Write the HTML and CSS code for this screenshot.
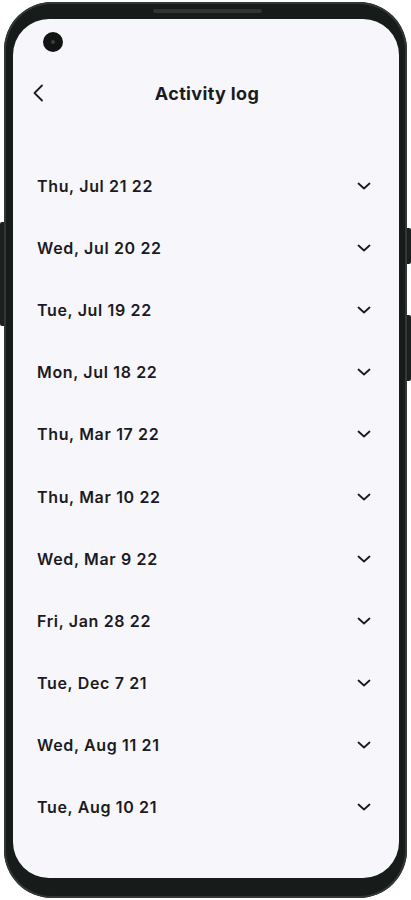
FILE: index.html
```html
<!DOCTYPE html>
<html lang="en">
<head>
    <meta charset="UTF-8">
    <meta name="viewport" content="width=device-width, initial-scale=1.0">
    <title>Activity log</title>
    <link rel="stylesheet" href="styles.css">
</head>
<body>

    <div class="phone">
        <div class="speaker"></div>
        <div class="side-btn left-btn"></div>
        <div class="side-btn right-btn-1"></div>
        <div class="side-btn right-btn-2"></div>

        <div class="screen">
            <div class="camera"></div>

            <div class="header">
                <button class="back-btn" aria-label="Back">
                    <svg width="12" height="18" viewBox="0 0 12 18">
                        <path d="M10 1.5 L2.5 9 L10 16.5" fill="none" stroke="#1b1b1f" stroke-width="1.8" stroke-linecap="round" stroke-linejoin="round"/>
                    </svg>
                </button>
                <h1>Activity log</h1>
            </div>

            <ul class="log-list">
                <li class="log-item"><span>Thu, Jul 21 22</span><svg class="chev" width="14" height="8" viewBox="0 0 14 8"><path d="M1.5 1.5 L7 6.5 L12.5 1.5" /></svg></li>
                <li class="log-item"><span>Wed, Jul 20 22</span><svg class="chev" width="14" height="8" viewBox="0 0 14 8"><path d="M1.5 1.5 L7 6.5 L12.5 1.5" /></svg></li>
                <li class="log-item"><span>Tue, Jul 19 22</span><svg class="chev" width="14" height="8" viewBox="0 0 14 8"><path d="M1.5 1.5 L7 6.5 L12.5 1.5" /></svg></li>
                <li class="log-item"><span>Mon, Jul 18 22</span><svg class="chev" width="14" height="8" viewBox="0 0 14 8"><path d="M1.5 1.5 L7 6.5 L12.5 1.5" /></svg></li>
                <li class="log-item"><span>Thu, Mar 17 22</span><svg class="chev" width="14" height="8" viewBox="0 0 14 8"><path d="M1.5 1.5 L7 6.5 L12.5 1.5" /></svg></li>
                <li class="log-item"><span>Thu, Mar 10 22</span><svg class="chev" width="14" height="8" viewBox="0 0 14 8"><path d="M1.5 1.5 L7 6.5 L12.5 1.5" /></svg></li>
                <li class="log-item"><span>Wed, Mar 9 22</span><svg class="chev" width="14" height="8" viewBox="0 0 14 8"><path d="M1.5 1.5 L7 6.5 L12.5 1.5" /></svg></li>
                <li class="log-item"><span>Fri, Jan 28 22</span><svg class="chev" width="14" height="8" viewBox="0 0 14 8"><path d="M1.5 1.5 L7 6.5 L12.5 1.5" /></svg></li>
                <li class="log-item"><span>Tue, Dec 7 21</span><svg class="chev" width="14" height="8" viewBox="0 0 14 8"><path d="M1.5 1.5 L7 6.5 L12.5 1.5" /></svg></li>
                <li class="log-item"><span>Wed, Aug 11 21</span><svg class="chev" width="14" height="8" viewBox="0 0 14 8"><path d="M1.5 1.5 L7 6.5 L12.5 1.5" /></svg></li>
                <li class="log-item"><span>Tue, Aug 10 21</span><svg class="chev" width="14" height="8" viewBox="0 0 14 8"><path d="M1.5 1.5 L7 6.5 L12.5 1.5" /></svg></li>
            </ul>
        </div>
    </div>

</body>
</html>
```

FILE: styles.css
```css
body {
    background-color: white;
    font-family: Inter, "Noto Sans", sans-serif;
    margin: 0;
    padding: 0;
    height: 100vh;
}

.phone {
    position: relative;
    margin: 2px 4px 0 4px;
    width: 403px;
    height: 896px;
    box-sizing: border-box;
    padding: 17px 8px 20px 9px;
    border-radius: 48px;
    background-color: #171b1a;
    box-shadow: inset 0 0 0 2px #313836;
}

.speaker {
    position: absolute;
    top: 7px;
    left: 149px;
    width: 109px;
    height: 4px;
    border-radius: 2px;
    background-color: #2e3533;
}

.side-btn {
    position: absolute;
    width: 4px;
    background-color: #1c2120;
}

.left-btn {
    left: -4px;
    top: 220px;
    height: 104px;
    border-radius: 2px 0 0 2px;
}

.right-btn-1 {
    right: -4px;
    top: 226px;
    height: 36px;
    border-radius: 0 2px 2px 0;
}

.right-btn-2 {
    right: -4px;
    top: 313px;
    height: 66px;
    border-radius: 0 2px 2px 0;
}

.screen {
    position: relative;
    height: 100%;
    border-radius: 36px;
    background-color: #f7f6fb;
    overflow: hidden;
}

.camera {
    position: absolute;
    top: 13px;
    left: 30px;
    width: 20px;
    height: 20px;
    border-radius: 50%;
    background-color: #121413;
}

.camera::after {
    content: "";
    position: absolute;
    top: 8px;
    left: 8px;
    width: 4px;
    height: 4px;
    border-radius: 50%;
    background-color: #3a3f3e;
}

.header {
    display: flex;
    align-items: center;
    justify-content: center;
    position: relative;
    height: 48px;
    margin-top: 50px;
}

.back-btn {
    position: absolute;
    left: 19px;
    top: 15px;
    padding: 0;
    border: none;
    background: none;
    display: flex;
}

.header h1 {
    margin: 0 0 0 2px;
    font-size: 18px;
    font-weight: 700;
    color: #1b1b1f;
    letter-spacing: 0.35px;
}

.log-list {
    list-style: none;
    margin: 38px 0 0 0;
    padding: 0 28px 0 24px;
}

.log-item {
    display: flex;
    align-items: center;
    justify-content: space-between;
    height: 62.1px;
    font-size: 16px;
    font-weight: 600;
    color: #1b1b1f;
    letter-spacing: 0.65px;
}

.chev path {
    fill: none;
    stroke: #1b1b1f;
    stroke-width: 1.8;
    stroke-linecap: round;
    stroke-linejoin: round;
}
```
